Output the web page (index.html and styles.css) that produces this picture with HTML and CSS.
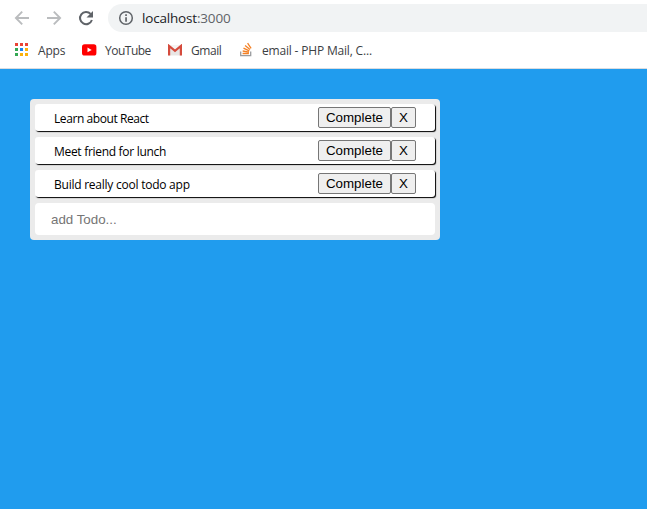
FILE: index.html
```html
<!DOCTYPE html>
<html lang="en">
<head>
<meta charset="utf-8">
<title>Todo</title>
<link rel="stylesheet" href="styles.css">
</head>
<body>
<header class="browser">
  <div class="toolbar">
    <svg class="nav" viewBox="0 0 16 16"><path d="M15 8H2M8.2 1.7 1.9 8l6.3 6.3" fill="none" stroke="#babcbe" stroke-width="1.9"/></svg>
    <svg class="nav" viewBox="0 0 16 16"><path d="M1 8h13M7.800 1.700 14.100 8l-6.300 6.300" fill="none" stroke="#babcbe" stroke-width="1.900"/></svg>
    <svg class="nav" viewBox="0 0 16 16"><path d="M13.900 10A6.100 6.100 0 1 1 12.600 3.900" fill="none" stroke="#5f6368" stroke-width="2"/><path d="M15 1v6.500H8.500z" fill="#5f6368"/></svg>
    <div class="address">
      <svg class="info" viewBox="0 0 16 16"><circle cx="8" cy="8" r="6.300" fill="none" stroke="#5f6368" stroke-width="1.500"/><path d="M7.200 4.300h1.700v1.700H7.200zM7.200 7.200h1.700v4.500H7.200z" fill="#5f6368"/></svg>
      <span class="url">localhost<span class="port">:3000</span></span>
    </div>
  </div>
  <nav class="bookmarks">
    <svg class="apps" viewBox="0 0 13 13"><path d="M0 0h3v3H0zM5 0h3v3H5zM10 0h3v3h-3z" fill="#ea4335"/><path d="M0 5h3v3H0zM0 10h3v3H0z" fill="#34a853"/><path d="M5 5h3v3H5z" fill="#1a84f0"/><path d="M10 5h3v3h-3zM5 10h3v3H5zM10 10h3v3h-3z" fill="#fbb10a"/></svg>
    <span class="label label-apps">Apps</span>
    <svg class="youtube" viewBox="0 0 15 12"><rect x="0" y="0.300" width="14.400" height="11.200" rx="2.600" fill="#f00"/><path d="M5.500 3.500v4.800l4.200-2.400z" fill="#fff"/></svg>
    <span class="label label-youtube">YouTube</span>
    <svg class="gmail" viewBox="0 0 15 12"><path d="M0.500 1h13v10.500h-13z" fill="#e8e6e5"/><path d="M0.500 1h13L7 6z" fill="#f5f4f3"/><path d="M1.100 11.500V2L7 6.900 12.900 2v9.500" fill="none" stroke="#d54b3d" stroke-width="2.200"/></svg>
    <span class="label label-gmail">Gmail</span>
    <svg class="stack" viewBox="0 0 13 15"><path d="M0.700 9.500v4.200h10V9.500" fill="none" stroke="#9a9c9f" stroke-width="1.300"/><path d="M2.600 11.500h6.300M2.700 9l6.300 1.100M3.500 6.200l5.800 2.600M5.100 3.500l4.900 4M7.600 1.200l3.500 5.200" fill="none" stroke="#f48024" stroke-width="1.300"/></svg>
    <span class="label label-email">email - PHP Mail, C...</span>
  </nav>
</header>
<main class="app">
  <div class="todo-list">
    <div class="todo"><span class="todo-text t1">Learn about React</span><div class="actions"><button class="complete">Complete</button><button class="remove">X</button></div></div>
    <div class="todo"><span class="todo-text t2">Meet friend for lunch</span><div class="actions"><button class="complete">Complete</button><button class="remove">X</button></div></div>
    <div class="todo"><span class="todo-text t3">Build really cool todo app</span><div class="actions"><button class="complete">Complete</button><button class="remove">X</button></div></div>
    <input class="input" type="text" placeholder="add Todo...">
  </div>
</main>
</body>
</html>
```
FILE: styles.css
```css
* { box-sizing: border-box; }
body {
  margin: 0;
  height: 509px;
  display: flex;
  flex-direction: column;
  overflow: hidden;
  background: #209cee;
  font-family: "Open Sans", "Noto Sans", sans-serif;
}
svg { display: block; flex: none; }
.browser { height: 69px; background: #fff; border-bottom: 1px solid #dadce0; }
.toolbar { display: flex; align-items: center; gap: 16px; height: 36px; padding-left: 14px; }
.nav { width: 16px; height: 16px; }
.address {
  flex: 1;
  height: 28px;
  margin-left: -2px;
  padding-left: 10px;
  display: flex;
  align-items: center;
  background: #f1f3f4;
  border-radius: 14px 0 0 14px;
}
.info { width: 16px; height: 16px; }
.url { margin-left: 8px; font-size: 13.5px; letter-spacing: -0.18px; line-height: 20px; color: #202124; }
.port { color: #5f6368; }
.bookmarks { display: flex; align-items: center; height: 27px; padding-left: 15px; }
.label { position: relative; top: 1px; font-size: 12px; line-height: 16px; white-space: nowrap; color: #3c4043; letter-spacing: -0.2px; }
.apps { width: 13px; height: 13px; }
.gmail { width: 15px; height: 12px; margin-right: 8px; }
.stack { width: 13px; height: 15px; margin-right: 9px; }
.youtube { width: 15px; height: 12px; margin-right: 8px; }
.label-apps { width: 44px; margin-left: 10px; }
.label-youtube { width: 63px; letter-spacing: -0.5px; }
.label-gmail { width: 49px; letter-spacing: -0.45px; }
.label-email { letter-spacing: -0.18px; }
.app { flex: 1; padding: 30px; }
.todo-list { width: 410px; height: 141px; padding: 5px; border-radius: 4px; background: #ebebeb; }
.todo {
  display: flex;
  align-items: center;
  justify-content: space-between;
  height: 27px;
  margin-bottom: 6px;
  padding: 0 19px;
  border-radius: 3px;
  background: #fff;
  box-shadow: 1px 1px 1px #000;
}
.todo-text { padding-top: 3px; font-size: 12px; line-height: 16px; white-space: nowrap; color: #000; }
.t1 { letter-spacing: -0.42px; }
.t2 { letter-spacing: -0.3px; }
.t3 { letter-spacing: -0.24px; }
.actions { display: flex; }
button {
  height: 21px;
  margin: 0;
  padding: 0;
  border: 1px solid #767676;
  border-radius: 2px;
  background: #efefef;
  color: #000;
  font: 13.333px/17px "Liberation Sans", Arial, sans-serif;
}
.complete { width: 73px; }
.remove { width: 25px; }
.input {
  display: block;
  width: 400px;
  height: 32px;
  padding: 0 16px;
  border: none;
  border-radius: 4px;
  background: #fff;
  font: 13.333px "Liberation Sans", Arial, sans-serif;
}
.input::placeholder { color: #757575; }
```
